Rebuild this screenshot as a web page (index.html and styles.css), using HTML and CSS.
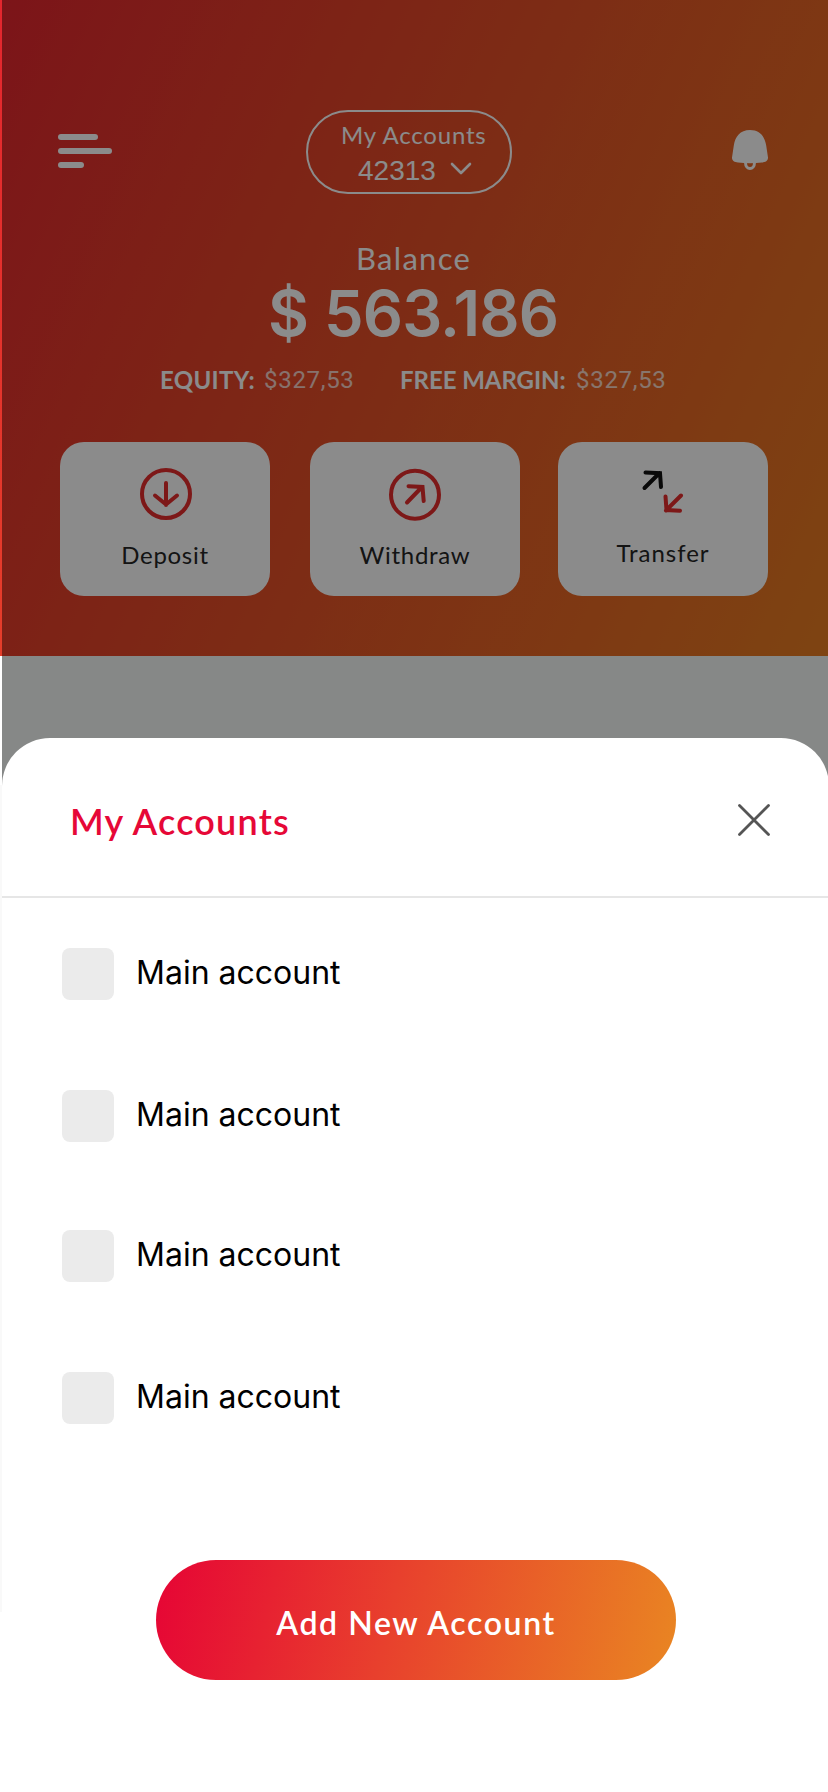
FILE: index.html
```
<!DOCTYPE html>
<html lang="en">
<head>
<meta charset="utf-8">
<title>My Accounts</title>
<link rel="stylesheet" href="styles.css">
</head>
<body>
<div class="screen">
  <main class="hero">
    <div class="topbar">
      <svg class="menu" width="54" height="34" viewBox="0 0 54 34" fill="#fff"><rect width="40" height="6" rx="3"/><rect y="14" width="54" height="6" rx="3"/><rect y="28" width="26" height="6" rx="3"/></svg>
      <div class="picker">
        <span class="picker-label">My Accounts</span>
        <span class="picker-row"><span class="picker-value">42313</span><svg width="22" height="13" viewBox="0 0 22 13" fill="none" stroke="#fff" stroke-width="2.6" stroke-linecap="round" stroke-linejoin="round"><path d="M2 2l9 9 9-9"/></svg></span>
      </div>
      <svg class="bell" width="36" height="40" viewBox="0 0 36 40"><path fill="#fff" d="M18 0C28 0 32.800 6.500 34.200 15.500L36 27.500C36.200 31 33.500 32.200 30 32.600Q18 34 6 32.600C2.500 32.200-.2 31 0 27.500L1.800 15.500C3.200 6.500 8 0 18 0Z"/><path fill="none" stroke="#fff" stroke-width="3" d="M13.500 32.500C13.500 40.500 22.500 40.500 22.500 32.500"/></svg>
    </div>
    <div class="balance-label">Balance</div>
    <div class="balance"><span class="currency">$</span><span>563.186</span></div>
    <div class="stats">
      <b class="equity">EQUITY:</b><span class="amount">$327,53</span>
      <b class="margin">FREE MARGIN:</b><span class="amount">$327,53</span>
    </div>
    <div class="actions">
      <div class="card">
        <svg width="52" height="52" viewBox="0 0 52 52" fill="none" stroke="#e52d2c" stroke-width="4" stroke-linecap="round"><circle cx="27" cy="26" r="24"/><path d="M27 15v22M16 27.500l11 9 11-9"/></svg>
        <span class="deposit">Deposit</span>
      </div>
      <div class="card">
        <svg width="52" height="52" viewBox="0 0 52 52" fill="none" stroke="#e52d2c" stroke-width="4" stroke-linecap="round"><circle cx="26" cy="26.700" r="24"/><path d="M18 34.500L33 19M19.500 18.200L33.500 19L34.700 33"/></svg>
        <span class="withdraw">Withdraw</span>
      </div>
      <div class="card card-transfer">
        <svg width="52" height="52" viewBox="0 0 52 52" fill="none" stroke-width="4" stroke-linecap="round"><path stroke="#111" d="M7.500 20L22.500 5M8.500 4.500L23 5.200L24 19"/><path stroke="#e52d2c" d="M44 27.500L29 42.500M28.500 28.500L29.500 42L43 42.700"/></svg>
        <span class="transfer">Transfer</span>
      </div>
    </div>
  </main>
  <div class="backdrop"></div>
  <div class="overlay"></div>
  <section class="sheet">
    <header class="sheet-head">
      <h1>My Accounts</h1>
      <svg width="32" height="32" viewBox="0 0 32 32" fill="none" stroke="#555" stroke-width="2.800" stroke-linecap="round"><path d="M1.500 1.500l29 29M30.500 1.500l-29 29"/></svg>
    </header>
    <div class="list">
      <label class="row"><i class="box"></i><span>Main account</span></label>
      <label class="row"><i class="box"></i><span>Main account</span></label>
      <label class="row"><i class="box"></i><span>Main account</span></label>
      <label class="row"><i class="box"></i><span>Main account</span></label>
    </div>
    <button class="add">Add New Account</button>
  </section>
</div>
</body>
</html>
```
FILE: styles.css
```
* { box-sizing: border-box; }
body { margin: 0; background: #fff; }
svg { display: block; flex: none; overflow: visible; }
.screen { position: relative; width: 828px; height: 1792px; overflow: hidden; background: linear-gradient(#fff 785px, #f9f9f9 785px, #f9f9f9 1612px, #fff 1612px); font-family: Lato, sans-serif; white-space: nowrap; }
.hero { height: 656px; padding: 110px 60px 0; color: #fff; background: linear-gradient(115deg, #e4262e, #e87d21); }
.backdrop { height: 244px; margin-left: 2px; background: #f6faf7; }
.overlay { position: absolute; top: 0; left: 2px; right: 0; height: 900px; background: rgba(0, 0, 0, .455); }
.topbar { display: grid; grid-template-columns: 246px 206px 1fr; height: 84px; }
.menu { margin: 24px 0 0 -2px; }
.bell { margin: 20px 0 0 auto; }
.picker { border: 2px solid #fff; border-radius: 42px; }
.picker-label { display: block; height: 30px; margin: 8px 0 0 33px; font-size: 24px; line-height: 30px; letter-spacing: .8px; }
.picker-row { display: flex; gap: 14px; margin: 5px 0 0 50px; height: 32px; font: 28px/32px "Liberation Sans", sans-serif; }
.picker-row svg { margin-top: 7px; }
.balance-label { margin-top: 46px; height: 36px; padding-left: 296px; font-size: 31px; line-height: 36px; letter-spacing: 1.300px; }
.balance { display: flex; gap: 16px; height: 76px; margin-top: -1px; padding-left: 208px; font: 600 63px/76px Inter, sans-serif; letter-spacing: -.9px; }
.stats { display: flex; height: 30px; margin-top: 14px; padding-left: 100px; font-size: 24px; line-height: 30px; }
.equity { width: 104px; letter-spacing: .3px; }
.margin { width: 176px; margin-left: 48px; letter-spacing: -.05px; }
.amount { width: 88px; font-family: Roboto, sans-serif; letter-spacing: .7px; opacity: .75; }
.actions { display: grid; grid-template-columns: 210px 210px 210px; column-gap: 40px; margin-top: 47px; }
.card { height: 154px; padding: 26px 0 0; border-radius: 24px; background: #fff; color: #252626; display: flex; flex-direction: column; align-items: center; font-size: 24px; line-height: 30px; }
.card span { margin-top: 20px; letter-spacing: .7px; }
.card-transfer { margin-left: -2px; margin-right: 2px; }
.card-transfer span { margin-top: 18px; letter-spacing: 1px; }
.sheet { position: absolute; left: 2px; top: 738px; width: 827px; height: 1054px; background: #fff; border-radius: 48px 48px 0 0; }
.sheet-head { height: 160px; border-bottom: 2px solid #e6e6e6; padding: 59px 59px 0 68px; display: flex; justify-content: space-between; }
.sheet-head h1 { margin: 0; font-size: 36px; line-height: 48px; font-weight: 600; letter-spacing: 1.200px; color: #e60837; }
.sheet-head svg { margin-top: 7px; }
.list { display: flex; flex-direction: column; gap: 90px; padding: 50px 0 0 60px; }
.row { display: flex; height: 52px; gap: 22px; align-items: flex-start; font: 32px/50px Inter, sans-serif; color: #000; }
.row:nth-child(3) { margin-top: -2px; }
.box { width: 52px; height: 52px; border-radius: 8px; background: #ebebeb; }
.add { display: block; width: 520px; height: 120px; margin: 136px 0 0 154px; padding: 5px 0 0; border: 0; border-radius: 60px; background: linear-gradient(103deg, #e60435, #e8402d 45%, #e98622); color: #fff; font: 600 32px/40px Lato, sans-serif; letter-spacing: 1.600px; }
```
